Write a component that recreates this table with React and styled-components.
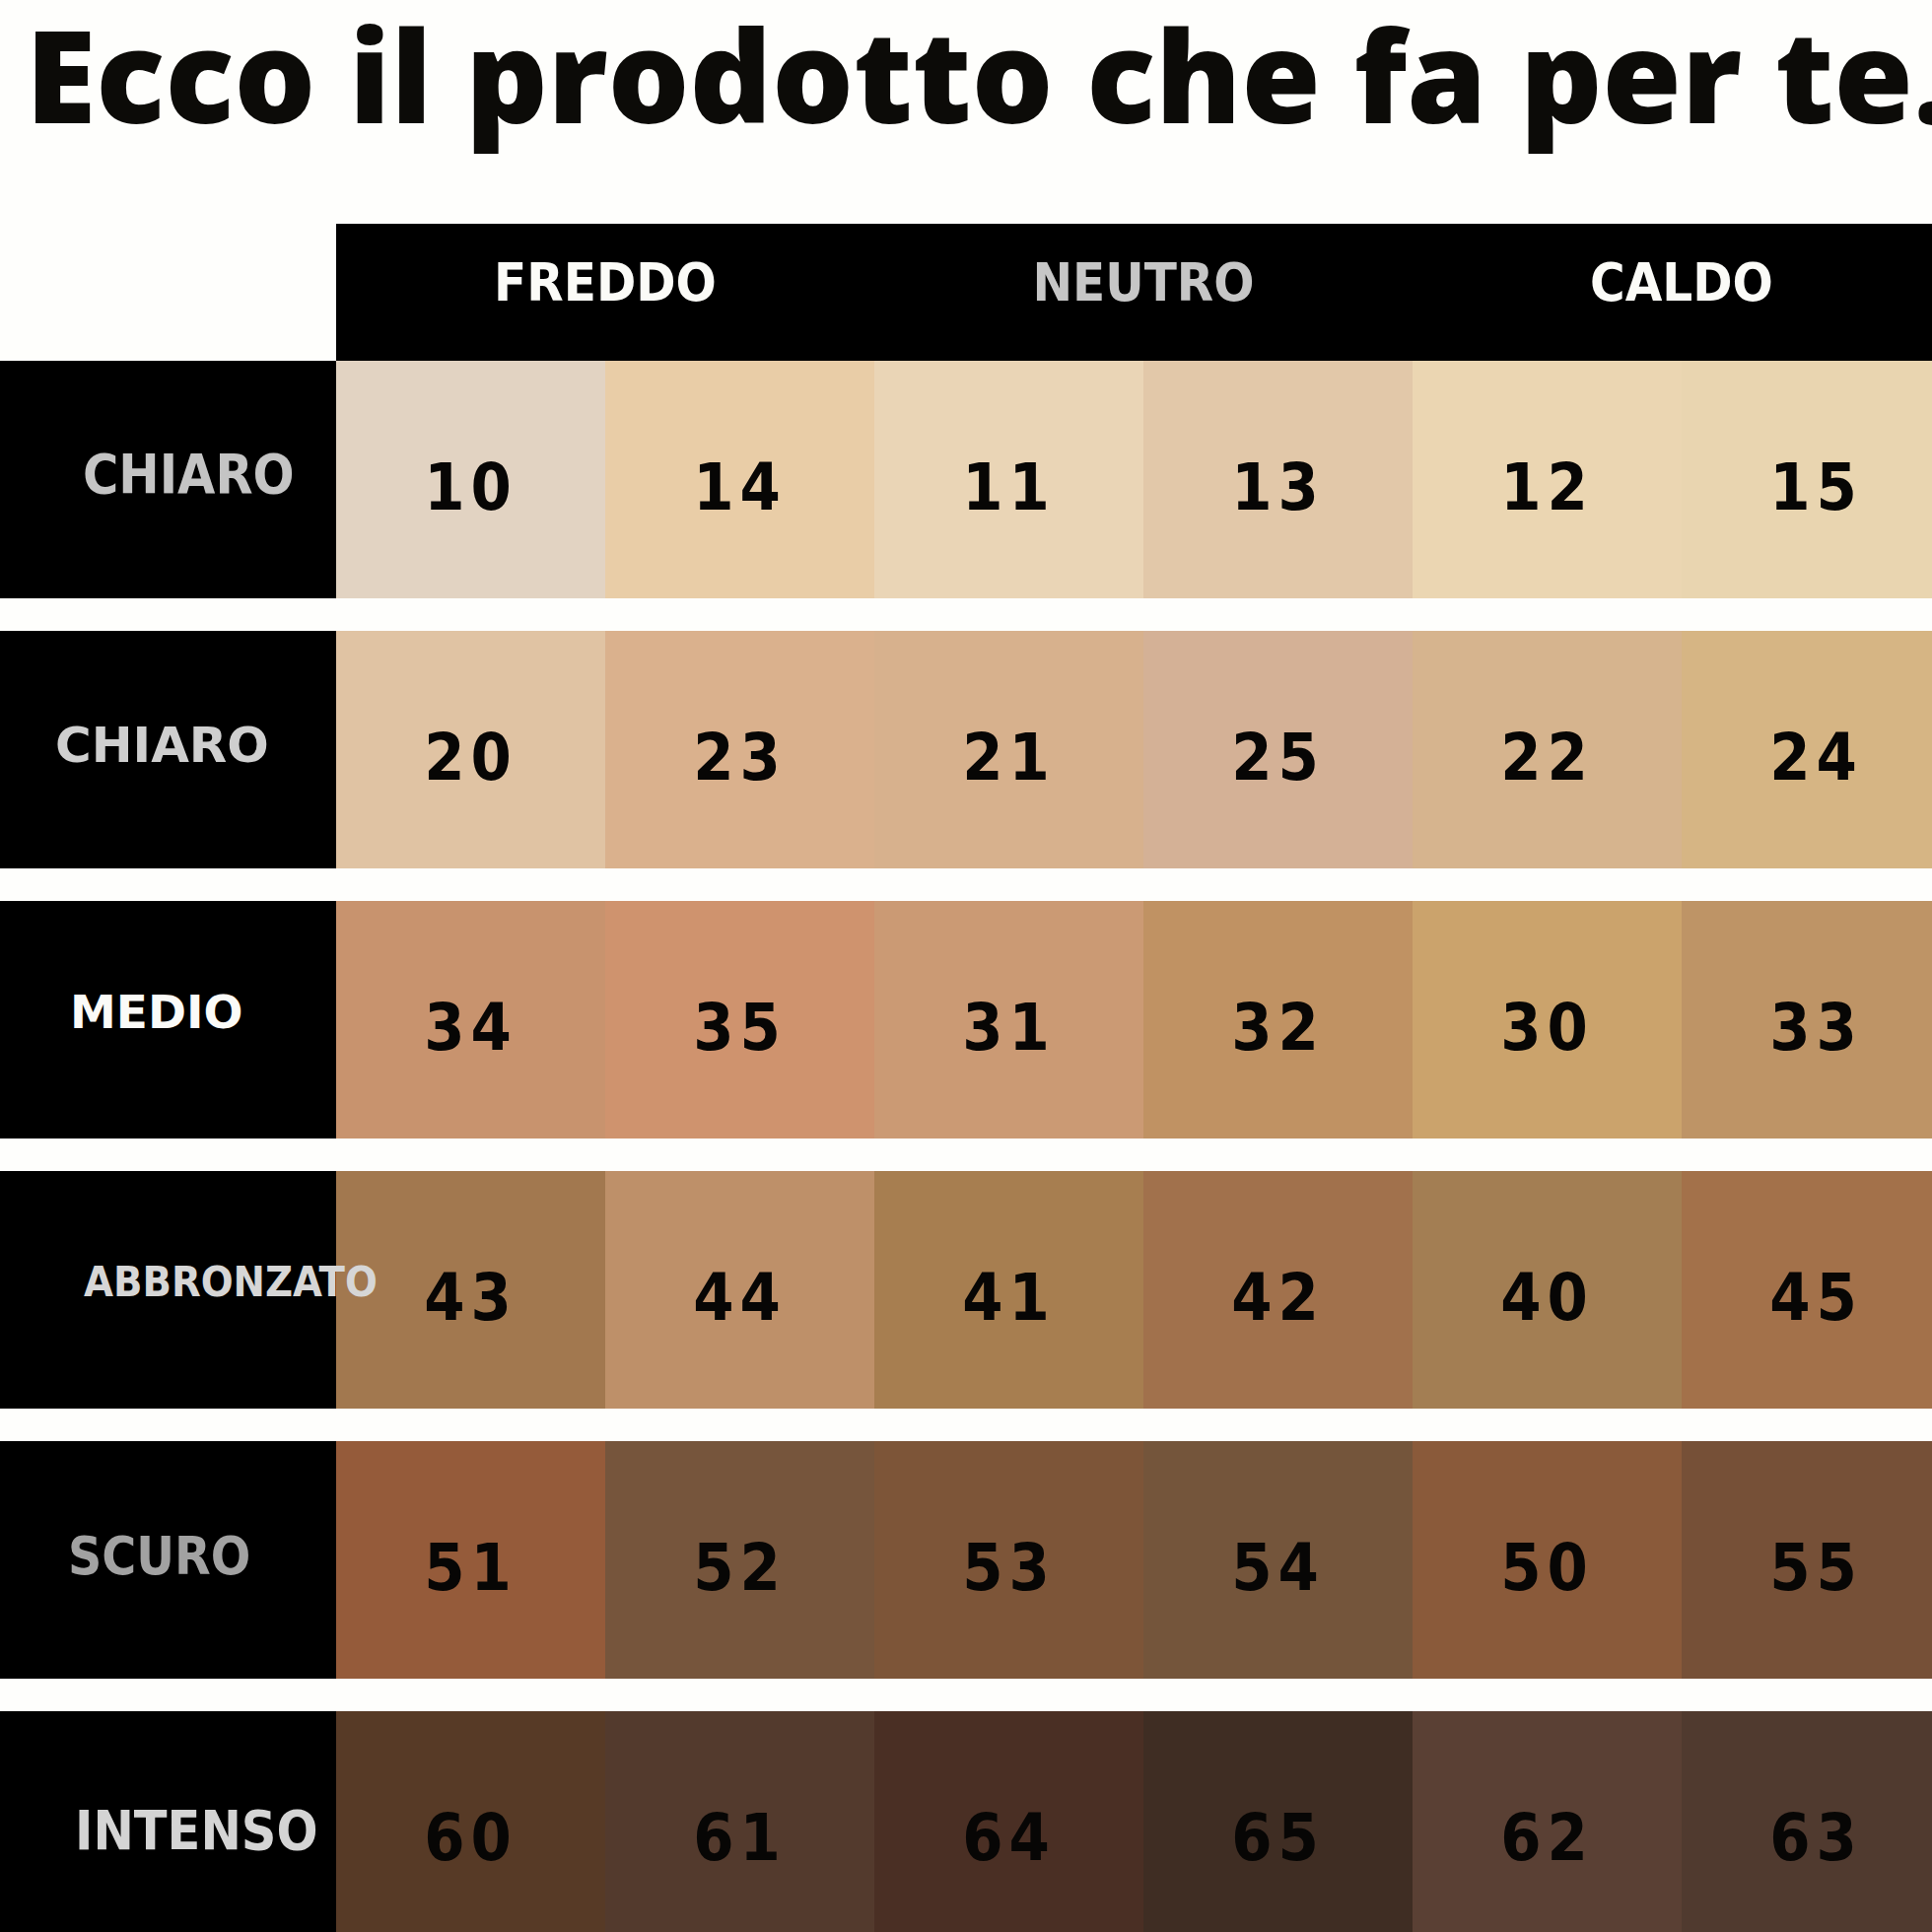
import React from 'react';
import styled, { createGlobalStyle } from 'styled-components';

const GlobalStyle = createGlobalStyle`
  html, body {
    margin: 0;
    padding: 0;
    background: #fefefc;
    overflow: hidden;
  }
`;

const CONDENSED = '"DejaVu Sans Condensed", "Liberation Sans Narrow", "DejaVu Sans", sans-serif';
const WIDE = '"DejaVu Sans", Verdana, sans-serif';

const Page = styled.div`
  width: 1979px;
  background: #fefefc;
`;

const Title = styled.h1`
  margin: 0 0 77px 0;
  padding-left: 26px;
  font-family: "Open Sans", Lato, sans-serif;
  font-weight: 800;
  font-size: 130px;
  line-height: 150px;
  letter-spacing: 0;
  color: #0c0b08;
  white-space: nowrap;
`;

const Table = styled.div`
  display: flex;
  flex-direction: column;
`;

const HeaderRow = styled.div`
  display: flex;
  height: 139px;
`;

const Corner = styled.div`
  width: 341px;
  flex: none;
  background: #fefefc;
`;

const HeaderBar = styled.div`
  flex: 1;
  display: grid;
  grid-template-columns: repeat(3, 546px);
  background: #000;
`;

const GroupLabel = styled.div`
  display: flex;
  align-items: center;
  justify-content: center;
  padding-bottom: 20px;
  font-family: ${CONDENSED};
  font-weight: 700;
  font-size: 54px;
  color: ${(p) => p.$color};
`;

const Body = styled.div`
  display: flex;
  flex-direction: column;
  gap: 33px;
`;

const Row = styled.div`
  display: flex;
  height: 241px;
`;

const RowLabel = styled.div`
  position: relative;
  z-index: 1;
  width: 341px;
  flex: none;
  box-sizing: border-box;
  display: flex;
  align-items: center;
  padding-left: ${(p) => p.$indent}px;
  padding-bottom: ${(p) => p.$lift}px;
  background: #000;
  color: ${(p) => p.$color};
  font-family: ${(p) => (p.$wide ? WIDE : CONDENSED)};
  font-weight: 700;
  font-size: ${(p) => p.$size}px;
  white-space: nowrap;
`;

const Swatch = styled.div`
  width: 273px;
  flex: none;
  display: flex;
  align-items: center;
  justify-content: center;
  padding-top: 16px;
  box-sizing: border-box;
  background: ${(p) => p.$bg};
  font-family: ${CONDENSED};
  font-weight: 700;
  font-size: 66px;
  letter-spacing: 6px;
  color: #070605;
`;

const groups = [
  { name: 'FREDDO', color: '#fbfbf7' },
  { name: 'NEUTRO', color: '#c6c6c6' },
  { name: 'CALDO', color: '#fbfbf7' },
];

const rows = [
  {
    label: 'CHIARO', color: '#c4c4c4', size: 55, indent: 84, lift: 12,
    cells: [['10', '#e2d3c2'], ['14', '#e9cda7'], ['11', '#ead5b6'], ['13', '#e2c8a9'], ['12', '#ebd6b2'], ['15', '#e9d5b0']],
  },
  {
    label: 'CHIARO', color: '#cfcfcf', size: 50, indent: 56, lift: 10, wide: true,
    cells: [['20', '#e0c3a3'], ['23', '#dab18d'], ['21', '#d7b18d'], ['25', '#d4b196'], ['22', '#d6b48e'], ['24', '#d6b584']],
  },
  {
    label: 'MEDIO', color: '#fbfbf8', size: 47, indent: 71, lift: 16, wide: true,
    cells: [['34', '#c8936e'], ['35', '#cf936e'], ['31', '#cb9a74'], ['32', '#c09263'], ['30', '#cba36c'], ['33', '#be9466']],
  },
  {
    label: 'ABBRONZATO', color: '#d6d6d6', size: 43, indent: 85, lift: 18,
    cells: [['43', '#a2784f'], ['44', '#be9069'], ['41', '#a77e50'], ['42', '#a1714c'], ['40', '#a37e53'], ['45', '#a3714a']],
  },
  {
    label: 'SCURO', color: '#a2a2a2', size: 53, indent: 69, lift: 8,
    cells: [['51', '#955b3a'], ['52', '#76553c'], ['53', '#7d5538'], ['54', '#74553b'], ['50', '#8a5a3a'], ['55', '#765037']],
  },
  {
    label: 'INTENSO', color: '#d4d4d4', size: 55, indent: 76, lift: 0,
    cells: [['60', '#573a26'], ['61', '#533a2d'], ['64', '#4a2f24'], ['65', '#3f2d23'], ['62', '#5a4034'], ['63', '#503a2f']],
  },
];

export default function App() {
  return (
    <Page>
      <GlobalStyle />
      <Title>Ecco il prodotto che fa per te.</Title>
      <Table>
        <HeaderRow>
          <Corner />
          <HeaderBar>
            {groups.map((g) => (
              <GroupLabel key={g.name} $color={g.color}>{g.name}</GroupLabel>
            ))}
          </HeaderBar>
        </HeaderRow>
        <Body>
          {rows.map((r, i) => (
            <Row key={i}>
              <RowLabel
                $color={r.color}
                $size={r.size}
                $indent={r.indent}
                $lift={r.lift}
                $wide={r.wide}
              >
                {r.label}
              </RowLabel>
              {r.cells.map(([num, bg]) => (
                <Swatch key={num} $bg={bg}>{num}</Swatch>
              ))}
            </Row>
          ))}
        </Body>
      </Table>
    </Page>
  );
}
